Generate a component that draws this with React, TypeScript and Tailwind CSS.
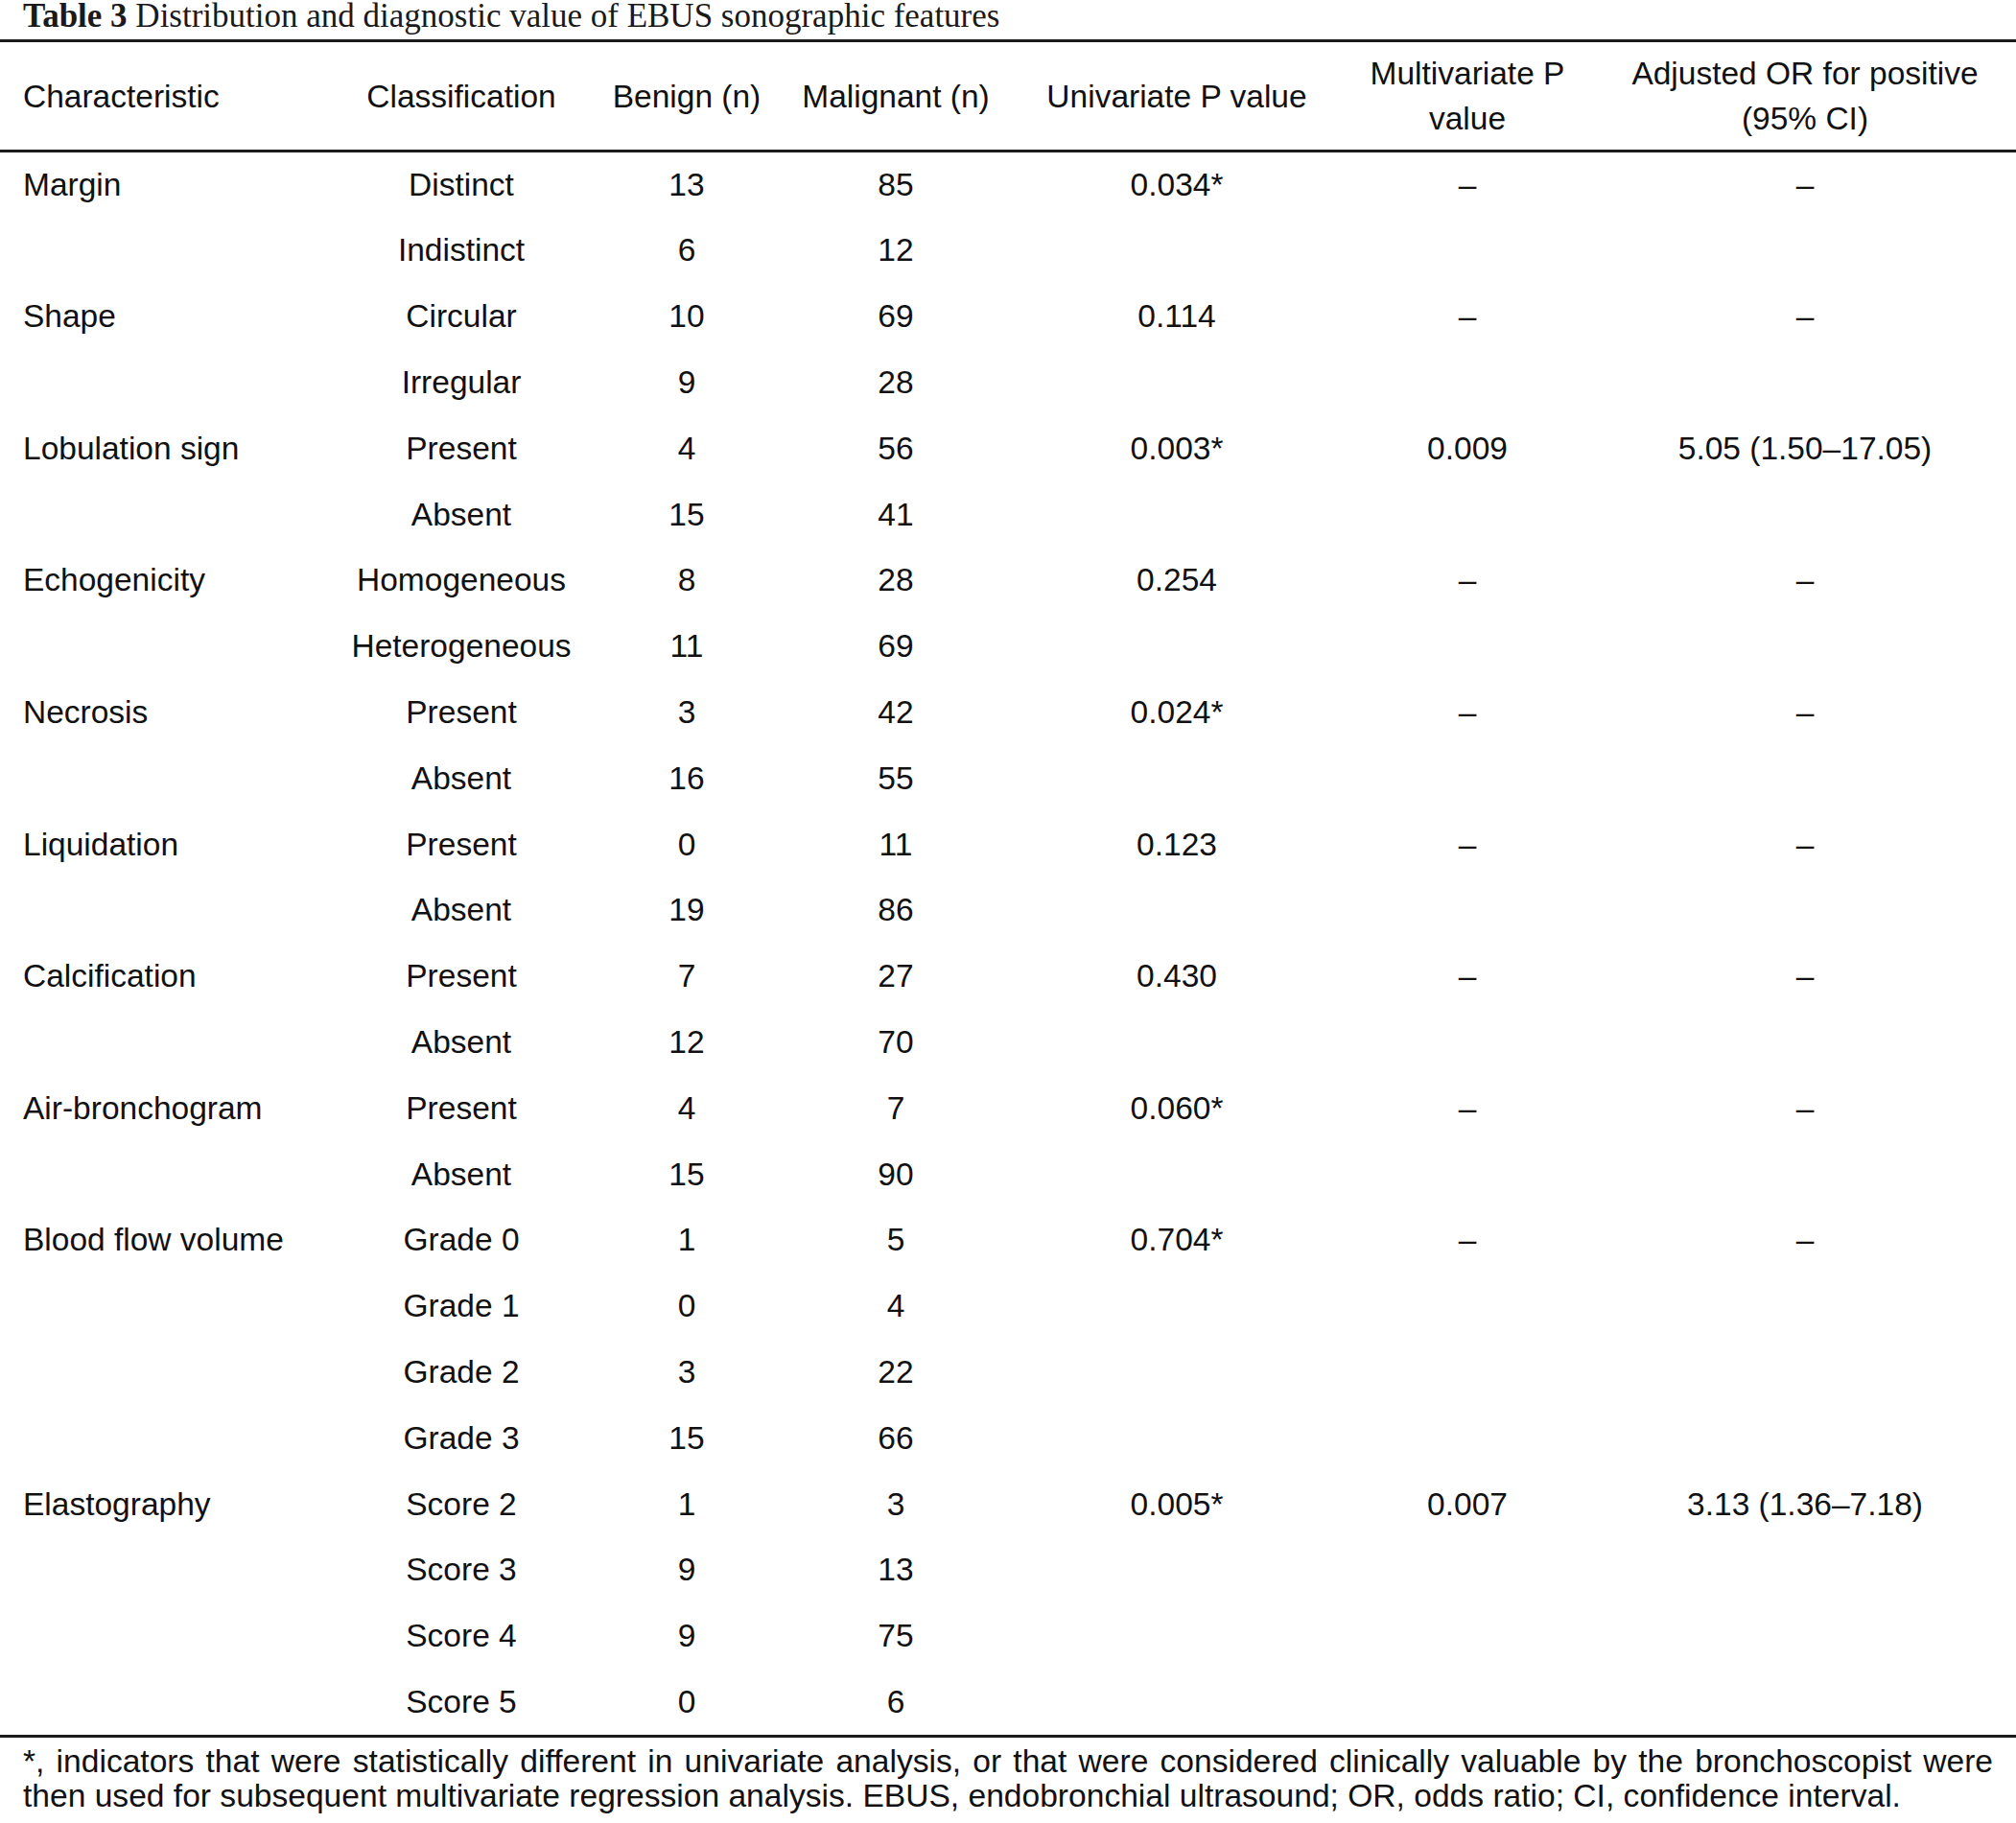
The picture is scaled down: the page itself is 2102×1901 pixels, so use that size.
const cols = "grid grid-cols-[342px_278px_192px_244px_342px_264px_440px]";

type Row = {
  feature?: string;
  cls: string;
  benign: string;
  malignant: string;
  uni?: string;
  multi?: string;
  or?: string;
};

const rows: Row[] = [
  { feature: "Margin", cls: "Distinct", benign: "13", malignant: "85", uni: "0.034*", multi: "–", or: "–" },
  { cls: "Indistinct", benign: "6", malignant: "12" },
  { feature: "Shape", cls: "Circular", benign: "10", malignant: "69", uni: "0.114", multi: "–", or: "–" },
  { cls: "Irregular", benign: "9", malignant: "28" },
  { feature: "Lobulation sign", cls: "Present", benign: "4", malignant: "56", uni: "0.003*", multi: "0.009", or: "5.05 (1.50–17.05)" },
  { cls: "Absent", benign: "15", malignant: "41" },
  { feature: "Echogenicity", cls: "Homogeneous", benign: "8", malignant: "28", uni: "0.254", multi: "–", or: "–" },
  { cls: "Heterogeneous", benign: "11", malignant: "69" },
  { feature: "Necrosis", cls: "Present", benign: "3", malignant: "42", uni: "0.024*", multi: "–", or: "–" },
  { cls: "Absent", benign: "16", malignant: "55" },
  { feature: "Liquidation", cls: "Present", benign: "0", malignant: "11", uni: "0.123", multi: "–", or: "–" },
  { cls: "Absent", benign: "19", malignant: "86" },
  { feature: "Calcification", cls: "Present", benign: "7", malignant: "27", uni: "0.430", multi: "–", or: "–" },
  { cls: "Absent", benign: "12", malignant: "70" },
  { feature: "Air-bronchogram", cls: "Present", benign: "4", malignant: "7", uni: "0.060*", multi: "–", or: "–" },
  { cls: "Absent", benign: "15", malignant: "90" },
  { feature: "Blood flow volume", cls: "Grade 0", benign: "1", malignant: "5", uni: "0.704*", multi: "–", or: "–" },
  { cls: "Grade 1", benign: "0", malignant: "4" },
  { cls: "Grade 2", benign: "3", malignant: "22" },
  { cls: "Grade 3", benign: "15", malignant: "66" },
  { feature: "Elastography", cls: "Score 2", benign: "1", malignant: "3", uni: "0.005*", multi: "0.007", or: "3.13 (1.36–7.18)" },
  { cls: "Score 3", benign: "9", malignant: "13" },
  { cls: "Score 4", benign: "9", malignant: "75" },
  { cls: "Score 5", benign: "0", malignant: "6" },
];

export default function App() {
  return (
    <div className="w-[2102px] min-h-[1901px] bg-white text-[#111] font-['Liberation_Sans',Arial,sans-serif]">
      <h1 className="h-[41px] pl-[24px] text-[35px] leading-[33px] font-['Liberation_Serif',serif] text-[#1a1a1a]">
        <span className="font-bold">Table 3</span> Distribution and diagnostic value of EBUS sonographic features
      </h1>

      <div className="border-t-[3px] border-b-[3px] border-[#1a1a1a]">
        <div className={`${cols} h-[112px] items-center text-[33.5px] leading-[47px]`}>
          <div className="pl-[24px]">Characteristic</div>
          <div className="text-center">Classification</div>
          <div className="text-center">Benign (n)</div>
          <div className="text-center">Malignant (n)</div>
          <div className="text-center">Univariate P value</div>
          <div className="text-center px-[10px]">Multivariate P value</div>
          <div className="text-center px-[20px]">Adjusted OR for positive (95% CI)</div>
        </div>
      </div>

      <div className="border-b-[3px] border-[#1a1a1a] -mt-[1px]">
        {rows.map((r, i) => (
          <div key={i} className={`${cols} h-[68.8px] items-center text-[33.5px] leading-none`}>
            <div className="pl-[24px]">{r.feature ?? ""}</div>
            <div className="text-center">{r.cls}</div>
            <div className="text-center">{r.benign}</div>
            <div className="text-center">{r.malignant}</div>
            <div className="text-center">{r.uni ?? ""}</div>
            <div className="text-center">{r.multi ?? ""}</div>
            <div className="text-center">{r.or ?? ""}</div>
          </div>
        ))}
      </div>

      <p className="px-[24px] pt-[7px] text-[33.6px] leading-[36px] text-justify">
        *, indicators that were statistically different in univariate analysis, or that were considered clinically valuable by the bronchoscopist were then used for subsequent multivariate regression analysis. EBUS, endobronchial ultrasound; OR, odds ratio; CI, confidence interval.
      </p>
    </div>
  );
}
